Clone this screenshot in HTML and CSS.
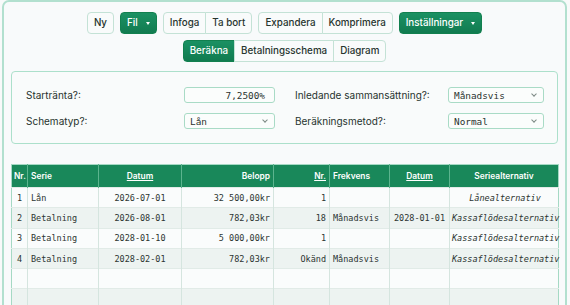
FILE: index.html
```html
<!DOCTYPE html>
<html lang="sv">
<head>
<meta charset="utf-8">
<link rel="stylesheet" href="styles.css">
</head>
<body>
<div class="app">
  <div class="toolbar">
    <div class="tb-row">
      <button class="btn">Ny</button>
      <button class="btn btn-green">Fil <span class="caret"></span></button>
      <div class="group">
        <button class="btn">Infoga</button>
        <button class="btn">Ta bort</button>
      </div>
      <div class="group">
        <button class="btn">Expandera</button>
        <button class="btn">Komprimera</button>
      </div>
      <button class="btn btn-green">Inställningar <span class="caret"></span></button>
    </div>
    <div class="tb-row">
      <div class="group">
        <button class="btn btn-green">Beräkna</button>
        <button class="btn">Betalningsschema</button>
        <button class="btn">Diagram</button>
      </div>
    </div>
  </div>

  <div class="form">
    <label class="lbl">Startränta?:</label>
    <div class="field input-right">7,2500%</div>
    <label class="lbl lbl2">Inledande sammansättning?:</label>
    <div class="field select wide">Månadsvis<span class="chev"></span></div>

    <label class="lbl">Schematyp?:</label>
    <div class="field select">Lån<span class="chev"></span></div>
    <label class="lbl lbl2">Beräkningsmetod?:</label>
    <div class="field select wide">Normal<span class="chev"></span></div>
  </div>

  <table class="grid">
    <colgroup>
      <col class="c-nr"><col class="c-serie"><col class="c-datum"><col class="c-belopp">
      <col class="c-nr2"><col class="c-frek"><col class="c-datum2"><col class="c-alt">
    </colgroup>
    <thead>
      <tr>
        <th class="l">Nr.</th>
        <th class="l">Serie</th>
        <th class="c"><u>Datum</u></th>
        <th class="r">Belopp</th>
        <th class="r"><u>Nr.</u></th>
        <th class="l">Frekvens</th>
        <th class="c"><u>Datum</u></th>
        <th class="c">Seriealternativ</th>
      </tr>
    </thead>
    <tbody>
      <tr>
        <td class="c">1</td><td>Lån</td><td class="c">2026-07-01</td><td class="r">32 500,00kr</td>
        <td class="r">1</td><td></td><td class="c"></td><td class="c i">Lånealternativ</td>
      </tr>
      <tr>
        <td class="c">2</td><td>Betalning</td><td class="c">2026-08-01</td><td class="r">782,03kr</td>
        <td class="r">18</td><td>Månadsvis</td><td class="c">2028-01-01</td><td class="c i">Kassaflödesalternativ</td>
      </tr>
      <tr>
        <td class="c">3</td><td>Betalning</td><td class="c">2028-01-10</td><td class="r">5 000,00kr</td>
        <td class="r">1</td><td></td><td class="c"></td><td class="c i">Kassaflödesalternativ</td>
      </tr>
      <tr>
        <td class="c">4</td><td>Betalning</td><td class="c">2028-02-01</td><td class="r">782,03kr</td>
        <td class="r">Okänd</td><td>Månadsvis</td><td class="c"></td><td class="c i">Kassaflödesalternativ</td>
      </tr>
      <tr><td></td><td></td><td></td><td></td><td></td><td></td><td></td><td></td></tr>
      <tr><td></td><td></td><td></td><td></td><td></td><td></td><td></td><td></td></tr>
    </tbody>
  </table>
</div>
</body>
</html>
```
FILE: styles.css
```css
* { box-sizing: border-box; }
html, body { margin: 0; padding: 0; background: #f8fafa; }
body {
  font-family: Inter, "Noto Sans", sans-serif;
  color: #26322d;
  padding: 0 3px 0 2px;
}
.app {
  border: 2px solid #b2e0cf;
  border-radius: 7px;
  background: #f8fafb;
  padding: 10px 7px 20px;
  min-height: 330px;
}
.toolbar {
  display: flex;
  flex-direction: column;
  align-items: center;
  gap: 6px;
}
.tb-row {
  display: flex;
  gap: 6px;
  align-items: center;
}
.btn {
  font-family: Inter, sans-serif;
  font-size: 9.8px;
  font-weight: 500;
  color: #26342e;
  height: 22px;
  padding: 0 6px;
  border: 1px solid #c4e2d6;
  border-radius: 4px;
  background: #f9fbfb;
  display: inline-flex;
  align-items: center;
  gap: 8px;
  line-height: 1;
}
.btn-green {
  background: linear-gradient(#1b9163, #117b50);
  border-color: #12804f;
  color: #fff;
}
.caret {
  width: 0; height: 0;
  border-left: 2.5px solid transparent;
  border-right: 2.5px solid transparent;
  border-top: 3px solid #fff;
}
.group { display: flex; }
.group .btn { border-radius: 0; }
.group .btn + .btn { margin-left: -1px; }
.group .btn:first-child { border-radius: 4px 0 0 4px; }
.group .btn:last-child { border-radius: 0 4px 4px 0; }

.form {
  margin-top: 9px;
  border: 1px solid #ace0cb;
  border-radius: 4px;
  background: #f9fbfb;
  padding: 15px 14px 14px 14px;
  display: grid;
  grid-template-columns: 158px 91px 20px 153px 96px;
  row-gap: 10px;
  align-items: center;
}
.lbl {
  font-size: 10px;
  color: #27332e;
}
.lbl2 { grid-column: 4; }
.field {
  height: 16px;
  border: 1px solid #a9dbc6;
  border-radius: 3px;
  background: #fbfdfc;
  font-family: "DejaVu Sans Mono", monospace;
  font-size: 9.4px;
  color: #2b3430;
  display: flex;
  align-items: center;
  padding: 0 6px;
  position: relative;
}
.input-right { justify-content: flex-end; padding-right: 9px; }
.select { padding-left: 5px; }
.chev {
  position: absolute;
  right: 7px;
  top: 4px;
  width: 4px; height: 4px;
  border-right: 1px solid #7d8a85;
  border-bottom: 1px solid #7d8a85;
  transform: rotate(45deg);
}

.grid {
  margin-top: 20px;
  width: 547px;
  border-collapse: collapse;
  table-layout: fixed;
  border: 1px solid #a5d9c4;
}
.c-nr { width: 16px; }
.c-serie { width: 71px; }
.c-datum { width: 83px; }
.c-belopp { width: 92px; }
.c-nr2 { width: 56px; }
.c-frek { width: 60px; }
.c-datum2 { width: 60px; }
.c-alt { width: 109px; }
.grid th {
  background: #19885a;
  color: #fff;
  font-family: Inter, sans-serif;
  font-size: 8.4px;
  font-weight: 600;
  height: 23px;
  padding: 0 3px;
  border-left: 1px solid #5cb48e;
  white-space: nowrap;
  overflow: hidden;
}
.grid th:first-child { border-left: none; padding: 0 1px 0 2px; }
.grid th u { text-underline-offset: 1px; }
.grid td {
  font-family: "DejaVu Sans Mono", monospace;
  font-size: 8.5px;
  color: #2c3531;
  height: 20.3px;
  padding: 0 3px;
  border-left: 1px solid #d5e5df;
  border-top: 1px solid #e1ebe7;
  white-space: nowrap;
  overflow: visible;
}
.grid td:first-child { border-left: none; }
.grid tbody tr:nth-child(odd) td { background: #fafcfc; }
.grid tbody tr:nth-child(even) td { background: #edf3f1; }
.l { text-align: left; }
.c { text-align: center; }
.r { text-align: right; }
.i { font-style: italic; }
.grid td.i { padding: 0 0 0 2px; }
```
